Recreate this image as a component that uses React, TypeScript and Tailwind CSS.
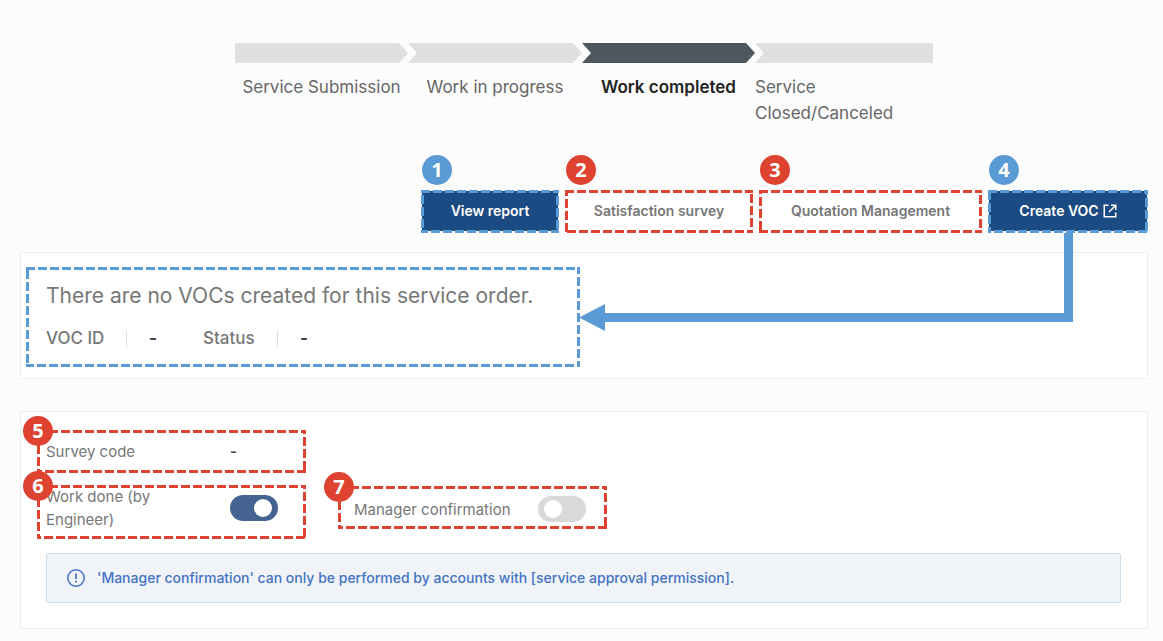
import { useState, type ReactNode } from "react";

type Tone = "blue" | "red";

const toneFill: Record<Tone, string> = {
  blue: "bg-[#5b9bd5]",
  red: "bg-[#de4231]",
};

const toneStroke: Record<Tone, string> = {
  blue: "stroke-[#5b9bd5]",
  red: "stroke-[#de4231]",
};

function Badge({ n, tone, place }: { n: number; tone: Tone; place: string }) {
  return (
    <span
      className={`absolute z-10 flex size-[30px] items-center justify-center rounded-full font-['Noto_Sans',sans-serif] text-xl font-bold text-white ${toneFill[tone]} ${place}`}
    >
      {n}
    </span>
  );
}

/* The stroke is drawn at double width; its outer half falls outside the box. */
function DashedFrame({ tone }: { tone: Tone }) {
  return (
    <svg className="pointer-events-none absolute inset-0 size-full overflow-hidden" aria-hidden="true">
      <rect width="100%" height="100%" fill="none" strokeWidth="6" strokeDasharray="9 3" className={toneStroke[tone]} />
    </svg>
  );
}

function Callout({
  n,
  tone,
  badge,
  className,
  children,
}: {
  n?: number;
  tone: Tone;
  badge?: string;
  className: string;
  children: ReactNode;
}) {
  return (
    <div className={`relative ${className}`}>
      {children}
      <DashedFrame tone={tone} />
      {n !== undefined && <Badge n={n} tone={tone} place={badge ?? ""} />}
    </div>
  );
}

const first =
  "bg-[#dedfe1] [clip-path:polygon(0_0,calc(100%-9px)_0,100%_50%,calc(100%-9px)_100%,0_100%)]";
const middle =
  "bg-[#dedfe1] [clip-path:polygon(0_0,calc(100%-9px)_0,100%_50%,calc(100%-9px)_100%,0_100%,9px_50%)]";
const current =
  "bg-[#4e565e] [clip-path:polygon(0_0,calc(100%-9px)_0,100%_50%,calc(100%-9px)_100%,0_100%,9px_50%)]";
const last = "bg-[#dedfe1] [clip-path:polygon(0_0,100%_0,100%_100%,0_100%,9px_50%)]";

const steps = [
  { label: "Service Submission", shape: first, text: "text-center" },
  { label: "Work in progress", shape: middle, text: "text-center" },
  { label: "Work completed", shape: current, text: "text-center font-semibold text-[#222]" },
  { label: "Service Closed/Canceled", shape: last, text: "text-left" },
];

function Steps() {
  return (
    <ol className="mx-auto grid w-full max-w-[698px] grid-cols-[173fr_174fr_173fr_178fr] text-[17px] leading-[26px] text-[#666]">
      {steps.map((s) => (
        <li key={s.label} aria-current={s.shape === current ? "step" : undefined}>
          <div className={`h-5 ${s.shape}`} />
          <p className={`mt-[11px] ${s.text}`}>{s.label}</p>
        </li>
      ))}
    </ol>
  );
}

function Switch({ id, initial }: { id: string; initial: boolean }) {
  const [on, setOn] = useState(initial);
  return (
    <input
      id={id}
      type="checkbox"
      role="switch"
      checked={on}
      onChange={(e) => setOn(e.target.checked)}
      className="flex h-[26px] w-12 shrink-0 cursor-pointer appearance-none items-center rounded-full bg-[#d9d9d9] px-1.5 before:size-[18px] before:rounded-full before:bg-white before:content-[''] checked:justify-end checked:bg-[#446391]"
    />
  );
}

function ExternalIcon() {
  return (
    <svg viewBox="0 0 14 14" className="size-3.5" fill="none" stroke="currentColor" strokeWidth="1.5" aria-hidden="true">
      <path d="M5.5 1.25H1.25v11.5h11.5V8.5" />
      <path d="M8 1.25h4.75V6M12.5 1.5 6 8" />
    </svg>
  );
}

function Arrow() {
  return (
    <svg
      className="pointer-events-none absolute -top-5 right-[74px] left-[558px] h-[99px] w-[calc(100%-632px)] overflow-hidden fill-[#5b9bd5]"
      aria-hidden="true"
    >
      <polygon points="0,84.5 26,71 26,98" />
      <rect x="25" y="80" width="100%" height="9" />
      <svg x="100%" overflow="visible">
        <rect x="-9" y="0" width="9" height="89" />
      </svg>
    </svg>
  );
}

const solid = "mx-px mt-px mb-0.5 flex h-10 w-[calc(100%-2px)] cursor-pointer items-center justify-center gap-1 bg-[#1b4b82] text-white";
const plain = "mx-px mt-px mb-0.5 flex h-10 w-[calc(100%-2px)] cursor-pointer items-center justify-center bg-white text-[#777]";

export default function App() {
  return (
    <main className="min-h-screen bg-[#fcfcfc] pt-[43px] pr-[15px] pb-3 pl-5 font-[Inter,'Liberation_Sans',sans-serif] text-[#777]">
      <Steps />

      <div className="mt-16 flex justify-end gap-1.5 text-sm font-semibold">
        <Callout n={1} tone="blue" badge="-top-[35px] left-px" className="flow-root h-[43px] w-[138px]">
          <button type="button" className={solid}>View report</button>
        </Callout>
        <Callout n={2} tone="red" badge="-top-[35px] left-px" className="flow-root h-[43px] w-[188px]">
          <button type="button" className={plain}>Satisfaction survey</button>
        </Callout>
        <Callout n={3} tone="red" badge="-top-[35px] left-px" className="flow-root h-[43px] w-[223px]">
          <button type="button" className={plain}>Quotation Management</button>
        </Callout>
        <Callout n={4} tone="blue" badge="-top-[35px] left-px" className="flow-root h-[43px] w-40">
          <button type="button" className={solid}>
            Create VOC
            <ExternalIcon />
          </button>
        </Callout>
      </div>

      <section className="relative mt-[19px] border border-[#eee] bg-white px-[5px] pt-3.5 pb-[11px]">
        <Callout tone="blue" className="w-[554px] max-w-full px-5 pt-3.5 pb-3">
          <h2 className="text-[21px] leading-[30px]">There are no VOCs created for this service order.</h2>
          <dl className="mt-3 flex h-8 items-center text-[17px] font-medium">
            <dt className="w-20">VOC ID</dt>
            <dd className="flex items-center">
              <span className="h-4 w-px bg-[#ddd]" />
              <span className="w-[76px] pl-[22px] font-bold text-[#444]">-</span>
            </dd>
            <dt className="w-[74px]">Status</dt>
            <dd className="flex items-center">
              <span className="h-4 w-px bg-[#ddd]" />
              <span className="pl-[22px] font-bold text-[#444]">-</span>
            </dd>
          </dl>
        </Callout>
        <Arrow />
      </section>

      <section className="mt-8 border border-[#eee] bg-white pt-[18px] pr-[26px] pb-[25px] pl-[25px] text-[15px] leading-[23px]">
        <div className="-ml-[9px] flex items-end gap-8">
          <div className="flex w-[269px] flex-col gap-3">
            <Callout n={5} tone="red" badge="-top-3.5 -left-3.5" className="flex h-[43px] items-center pl-[9px]">
              <span className="w-[184px]">Survey code</span>
              <span className="font-semibold text-[#444]">-</span>
            </Callout>
            <Callout n={6} tone="red" badge="-top-3.5 -left-3.5" className="flex items-center justify-between pr-7 pb-2 pl-[9px]">
              <label htmlFor="work-done" className="w-[130px]">Work done (by Engineer)</label>
              <Switch id="work-done" initial={true} />
            </Callout>
          </div>
          <Callout n={7} tone="red" badge="-top-3.5 -left-3.5" className="mb-2.5 flex h-[43px] w-[269px] items-center justify-between pt-[3px] pr-[21px] pl-4">
            <label htmlFor="manager-confirmation">Manager confirmation</label>
            <Switch id="manager-confirmation" initial={false} />
          </Callout>
        </div>

        <p className="mt-3.5 flex min-h-[50px] items-center gap-3 rounded-xs border border-[#d0dfec] bg-[#f0f4f8] px-5 text-sm font-medium text-[#4472c4]">
          <svg viewBox="0 0 18 18" className="size-[18px] shrink-0" fill="none" stroke="currentColor" strokeWidth="1.5" aria-hidden="true">
            <circle cx="9" cy="9" r="8.2" />
            <path d="M9 4.5v5.6M9 11.7v1.8" strokeWidth="1.7" />
          </svg>
          'Manager confirmation' can only be performed by accounts with [service approval permission].
        </p>
      </section>
    </main>
  );
}
